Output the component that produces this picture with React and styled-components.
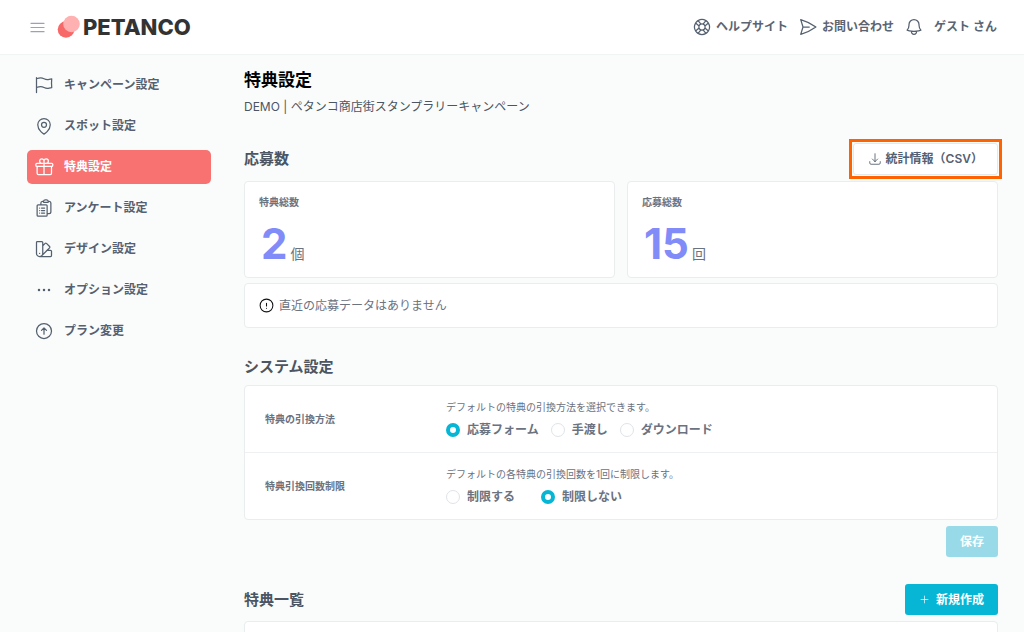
import React, { useState } from "react"
import styled, { createGlobalStyle, css } from "styled-components"
import {
  HiOutlineArrowDownTray,
  HiOutlineArrowUpCircle,
  HiOutlineBars3,
  HiOutlineBell,
  HiOutlineClipboardDocumentList,
  HiOutlineEllipsisHorizontal,
  HiOutlineExclamationCircle,
  HiOutlineFlag,
  HiOutlineGift,
  HiOutlineLifebuoy,
  HiOutlineMapPin,
  HiOutlinePaperAirplane,
  HiOutlinePlus,
  HiOutlineSwatch,
} from "react-icons/hi2"

const GlobalStyle = createGlobalStyle`
  * {
    box-sizing: border-box;
  }

  body {
    margin: 0;
    background-color: #fafcfb;
    color: #4b5563;
    font-family: Inter, "Noto Sans CJK JP", sans-serif;
    font-size: 12px;
    line-height: 18px;
  }

  h1,
  h2,
  h3,
  p,
  fieldset {
    margin: 0;
    padding: 0;
    border: 0;
  }

  button {
    font: inherit;
    cursor: pointer;
  }

  svg {
    display: block;
    flex-shrink: 0;
  }
`

const Page = styled.div`
  display: flex;
  flex-direction: column;
  height: 100vh;
`

const Header = styled.header`
  display: flex;
  align-items: center;
  flex-shrink: 0;
  height: 55px;
  padding: 0 27px 0 28px;
  background-color: white;
  border-bottom: 1px solid #f1f4f4;
`

const MenuButton = styled.button`
  display: flex;
  padding: 0;
  border: 0;
  background: none;
  color: #9ca3af;
  font-size: 19px;
`

const Logo = styled.a`
  display: flex;
  align-items: center;
  gap: 3px;
  margin-left: 10px;
  color: #333;
  font-size: 22px;
  font-weight: 800;
  line-height: 24px;
  text-decoration: none;
`

const HeaderNav = styled.nav`
  display: flex;
  align-items: center;
  gap: 10px;
  margin-left: auto;
`

const HeaderLink = styled.a`
  display: flex;
  align-items: center;
  gap: ${props => props.$gap || "4px"};
  color: #5b6472;
  font-weight: 600;
  text-decoration: none;

  svg {
    color: #55606f;
    font-size: 20px;
  }
`

const Body = styled.div`
  display: flex;
  flex: 1;
  min-height: 0;
`

const Sidebar = styled.nav`
  display: flex;
  flex-direction: column;
  flex-shrink: 0;
  gap: 7px;
  width: 211px;
  padding: 13px 0 0 27px;
`

const SidebarLink = styled.a`
  display: flex;
  align-items: center;
  gap: 10px;
  height: 34px;
  padding: 0 7px;
  border-radius: 5px;
  color: #566070;
  font-weight: 600;
  text-decoration: none;

  svg {
    font-size: 20px;
    color: #55606f;
  }

  ${props =>
    props.$active &&
    css`
      background-color: #f97272;
      color: white;

      svg {
        color: white;
      }
    `}
`

const Main = styled.main`
  flex: 1;
  min-width: 0;
  padding: 13px 26px 0 33px;
  overflow-y: auto;
  scrollbar-width: none;
`

const Title = styled.h1`
  color: black;
  font-size: 17px;
  line-height: 24px;
`

const Subtitle = styled.p`
  margin-top: 6px;
`

const Section = styled.section`
  margin-top: 27px;
`

const SectionHeader = styled.div`
  display: flex;
  align-items: center;
  justify-content: space-between;
  margin-bottom: 6px;
`

const SectionTitle = styled.h2`
  font-size: 15px;
  line-height: 24px;
`

const Button = styled.button`
  display: flex;
  align-items: center;
  justify-content: center;
  gap: 6px;
  height: 31px;
  padding: 0 14px;
  border: 0;
  border-radius: 3px;
  background-color: #06b6d4;
  color: white;
  font-weight: 700;

  &:disabled {
    background-color: #98dae8;
    cursor: default;
  }
`

const CsvButton = styled(Button)`
  gap: 4px;
  height: 32px;
  border: 1px solid #e5e7eb;
  background-color: white;
  color: #566070;
  font-weight: 600;
`

const Highlight = styled.div`
  outline: 3px solid #ff6200;
  outline-offset: 1px;
`

const Card = styled.div`
  border: 1px solid #e9eded;
  border-radius: 4px;
  background-color: white;
`

const Stats = styled.div`
  display: grid;
  grid-template-columns: 1fr 1fr;
  gap: 12px;
`

const StatCard = styled(Card)`
  height: 97px;
  padding: 12px 14px;
`

const StatLabel = styled.h3`
  color: #6b7280;
  font-size: 10px;
  line-height: 16px;
`

const StatValue = styled.p`
  display: flex;
  align-items: baseline;
  gap: 3px;
  padding-left: 2px;
  color: #6b7280;
  font-size: 14px;

  strong {
    color: #818cf8;
    font-size: 42px;
    line-height: 68px;
  }
`

const Notice = styled(Card)`
  display: flex;
  align-items: center;
  gap: 4px;
  height: 45px;
  margin-top: 5px;
  padding: 0 13px;
  color: #6b7280;

  svg {
    color: #111;
    font-size: 17px;
  }
`

const SettingRow = styled.div`
  display: grid;
  grid-template-columns: 181px 1fr;
  align-items: center;
  padding: 13px 20px;

  & + & {
    border-top: 1px solid #eef0f1;
  }
`

const SettingLabel = styled.h3`
  color: #6b7280;
  font-size: 10px;
  line-height: 16px;
`

const SettingHelp = styled.p`
  color: #6b7280;
  font-size: 10px;
  line-height: 16px;
`

const RadioGroup = styled.fieldset`
  display: flex;
  gap: ${props => props.$gap};
  margin-top: 6px;
`

const RadioLabel = styled.label`
  display: flex;
  align-items: center;
  gap: 7px;
  color: #6b7280;
  font-weight: 600;
`

const Radio = styled.input`
  appearance: none;
  width: 14px;
  height: 14px;
  margin: 0;
  border: 1px solid #dfe3e8;
  border-radius: 50%;
  background-color: white;

  &:checked {
    border: 4px solid #06b6d4;
  }
`

const Actions = styled.div`
  display: flex;
  justify-content: flex-end;
  margin-top: 6px;
`

const ListCard = styled(Card)`
  min-height: 96px;
`

const menu = [
  { label: "キャンペーン設定", icon: HiOutlineFlag },
  { label: "スポット設定", icon: HiOutlineMapPin },
  { label: "特典設定", icon: HiOutlineGift, active: true },
  { label: "アンケート設定", icon: HiOutlineClipboardDocumentList },
  { label: "デザイン設定", icon: HiOutlineSwatch },
  { label: "オプション設定", icon: HiOutlineEllipsisHorizontal },
  { label: "プラン変更", icon: HiOutlineArrowUpCircle },
]

const settings = [
  {
    name: "method",
    label: "特典の引換方法",
    help: "デフォルトの特典の引換方法を選択できます。",
    options: ["応募フォーム", "手渡し", "ダウンロード"],
    value: "応募フォーム",
    gap: "12px",
  },
  {
    name: "limit",
    label: "特典引換回数制限",
    help: "デフォルトの各特典の引換回数を1回に制限します。",
    options: ["制限する", "制限しない"],
    value: "制限しない",
    gap: "26px",
  },
]

const Setting = ({ name, label, help, options, value, gap }) => {
  const [selected, setSelected] = useState(value)

  return (
    <SettingRow>
      <SettingLabel id={name}>{label}</SettingLabel>
      <div>
        <SettingHelp>{help}</SettingHelp>
        <RadioGroup $gap={gap} aria-labelledby={name}>
          {options.map(option => (
            <RadioLabel key={option}>
              <Radio
                type="radio"
                name={name}
                checked={selected === option}
                onChange={() => setSelected(option)}
              />
              {option}
            </RadioLabel>
          ))}
        </RadioGroup>
      </div>
    </SettingRow>
  )
}

const App = () => {
  return (
    <Page>
      <GlobalStyle />
      <Header>
        <MenuButton type="button" aria-label="メニュー">
          <HiOutlineBars3 />
        </MenuButton>
        <Logo href="#">
          <svg width="23" height="24" viewBox="0 0 23 24">
            <circle cx="9" cy="14.5" r="8.3" fill="#f76868" />
            <circle cx="14.5" cy="9" r="8.3" fill="#ffb0b0" />
          </svg>
          PETANCO
        </Logo>
        <HeaderNav>
          <HeaderLink href="#">
            <HiOutlineLifebuoy />
            ヘルプサイト
          </HeaderLink>
          <HeaderLink href="#">
            <HiOutlinePaperAirplane />
            お問い合わせ
          </HeaderLink>
          <HeaderLink href="#" $gap="10px">
            <HiOutlineBell />
            ゲスト さん
          </HeaderLink>
        </HeaderNav>
      </Header>
      <Body>
        <Sidebar>
          {menu.map(({ label, icon: Icon, active }) => (
            <SidebarLink key={label} href="#" $active={active}>
              <Icon />
              {label}
            </SidebarLink>
          ))}
        </Sidebar>
        <Main>
          <Title>特典設定</Title>
          <Subtitle>DEMO | ペタンコ商店街スタンプラリーキャンペーン</Subtitle>

          <Section>
            <SectionHeader>
              <SectionTitle>応募数</SectionTitle>
              <Highlight>
                <CsvButton type="button">
                  <HiOutlineArrowDownTray size={14} />
                  統計情報（CSV）
                </CsvButton>
              </Highlight>
            </SectionHeader>
            <Stats>
              <StatCard>
                <StatLabel>特典総数</StatLabel>
                <StatValue>
                  <strong>2</strong>個
                </StatValue>
              </StatCard>
              <StatCard>
                <StatLabel>応募総数</StatLabel>
                <StatValue>
                  <strong>15</strong>回
                </StatValue>
              </StatCard>
            </Stats>
            <Notice>
              <HiOutlineExclamationCircle />
              直近の応募データはありません
            </Notice>
          </Section>

          <Section>
            <SectionHeader>
              <SectionTitle>システム設定</SectionTitle>
            </SectionHeader>
            <Card>
              {settings.map(setting => (
                <Setting key={setting.name} {...setting} />
              ))}
            </Card>
            <Actions>
              <Button type="button" disabled>
                保存
              </Button>
            </Actions>
          </Section>

          <Section>
            <SectionHeader>
              <SectionTitle>特典一覧</SectionTitle>
              <Button type="button">
                <HiOutlinePlus size={11} />
                新規作成
              </Button>
            </SectionHeader>
            <ListCard />
          </Section>
        </Main>
      </Body>
    </Page>
  )
}

export default App
